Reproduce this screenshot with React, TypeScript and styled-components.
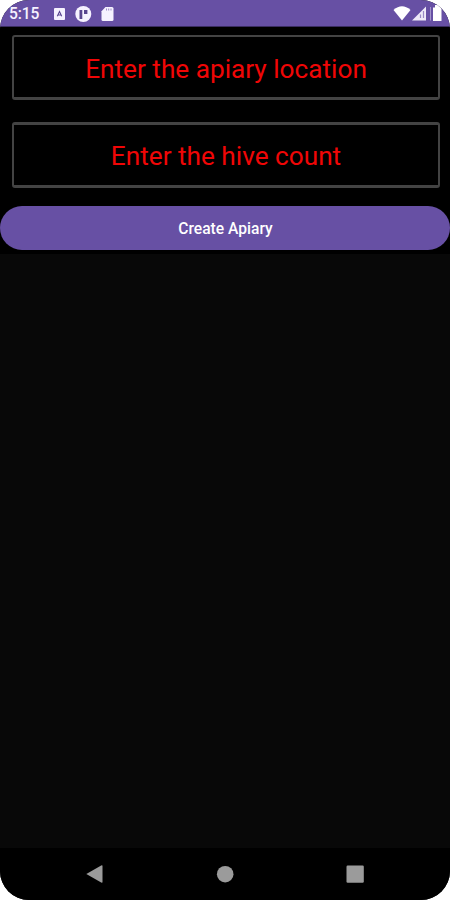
import React from "react";
import styled, { createGlobalStyle } from "styled-components";

const GlobalStyle = createGlobalStyle`
  *, *::before, *::after { box-sizing: border-box; }
  body { margin: 0; background: #fff; font-family: Roboto, "Liberation Sans", sans-serif; }
`;

const Screen = styled.div`
  display: flex;
  flex-direction: column;
  width: 450px;
  height: 900px;
  overflow: hidden;
  border-radius: 29px;
  background: #080808;
`;

const StatusBar = styled.header`
  display: flex;
  justify-content: space-between;
  flex: none;
  height: 27px;
  padding-left: 9px;
  background: #6750a4;
  border-bottom: 1px solid #3a2d60;
  color: #f6f2ff;
`;

const StatusGroup = styled.div`
  display: flex;
  align-items: flex-start;
`;

const Clock = styled.span`
  width: 40px;
  padding-top: 4px;
  font-size: 15.6px;
  line-height: 20px;
  font-weight: 500;
  letter-spacing: -0.1px;
`;

const StatusIcon = styled.svg`
  display: block;
  flex: none;
`;

const Form = styled.form`
  display: flex;
  flex-direction: column;
  flex: none;
  height: 227px;
  padding-top: 8px;
  background: #000;
`;

const Field = styled.input<{ $topEdge: number }>`
  display: block;
  height: ${(p) => 63 + p.$topEdge}px;
  margin: 0 10px 22px 12px;
  padding: ${(p) => 5 - p.$topEdge}px 0 0;
  border: solid #434343;
  border-width: ${(p) => p.$topEdge}px 2px 3px;
  border-radius: 3px;
  outline: none;
  background: #000;
  font-family: inherit;
  font-size: 26.2px;
  text-align: center;
  color: #f00606;
  &::placeholder { color: #f00606; opacity: 1; }
`;

const CreateButton = styled.button`
  height: 44px;
  margin-top: -4px;
  padding: 1px 0 0 1px;
  border: 0;
  border-radius: 22px;
  background: #6750a4;
  color: #fff;
  font-family: inherit;
  font-size: 15.6px;
  font-weight: 500;
`;

const Content = styled.main`
  flex: 1;
`;

const NavBar = styled.nav`
  display: flex;
  justify-content: space-between;
  align-items: center;
  flex: none;
  height: 52px;
  padding: 0 85px;
  background: #000;
`;

const NavIcon = styled.svg`
  display: block;
  width: 20px;
  height: 20px;
  fill: #9b9b9b;
`;

export default function App() {
  return (
    <>
      <GlobalStyle />
      <Screen>
        <StatusBar>
          <StatusGroup>
            <Clock>5:15</Clock>
            <StatusIcon width="70" height="26" viewBox="49 0 70 26">
              <rect x="54" y="8" width="11" height="12" rx="1" fill="#f6f2ff" />
              <path d="M57.300 16.300 59.500 11.500 61.700 16.300M58.200 15h2.600" fill="none" stroke="#5a4690" strokeWidth="1.1" />
              <circle cx="83.3" cy="14" r="8" fill="#f6f2ff" />
              <path d="M79.500 10h2.800v9h-2.800zM84 10h3.400v4H84z" fill="#59458f" />
              <path d="M105.500 7H112q1.500 0 1.500 1.500V19.500q0 1.500-1.500 1.500H103q-1.500 0-1.500-1.500V11.200z" fill="#f6f2ff" />
              <path d="M106.500 8.500v2M108.700 8.500v2M111 8.500v2" stroke="#9d8dc6" strokeWidth="1" />
            </StatusIcon>
          </StatusGroup>
          <StatusIcon width="57" height="26" viewBox="393 0 57 26">
            <path d="M393.500 10Q402 2.500 410.500 10L402 20.500z" fill="#fff" />
            <path d="M412 20.500 426 6.500V20.500z" fill="#eee9f8" />
            <path d="M420.500 14.500v3.500M423.500 11v7" stroke="#9a89c6" strokeWidth="1.200" />
            <path d="M430.500 7v13.500" stroke="#a294ca" strokeWidth="1" />
            <path d="M433 7.500h2V5h6v2.500h.500V21H433z" fill="#fff" />
          </StatusIcon>
        </StatusBar>
        <Form onSubmit={(event) => event.preventDefault()}>
          <Field $topEdge={2} placeholder="Enter the apiary location" />
          <Field $topEdge={3} placeholder="Enter the hive count" />
          <CreateButton type="submit">Create Apiary</CreateButton>
        </Form>
        <Content />
        <NavBar>
          <NavIcon viewBox="0 0 20 20" aria-label="Back">
            <path d="M1.300 10 16.200 1.500Q17.500 1 17.500 2V18Q17.500 19 16.200 18.500z" />
          </NavIcon>
          <NavIcon viewBox="0 0 20 20" aria-label="Home">
            <circle cx="10.200" cy="10.200" r="8.300" />
          </NavIcon>
          <NavIcon viewBox="0 0 20 20" aria-label="Overview">
            <rect x="1.500" y="1.500" width="17.300" height="17.300" rx="1.200" />
          </NavIcon>
        </NavBar>
      </Screen>
    </>
  );
}
